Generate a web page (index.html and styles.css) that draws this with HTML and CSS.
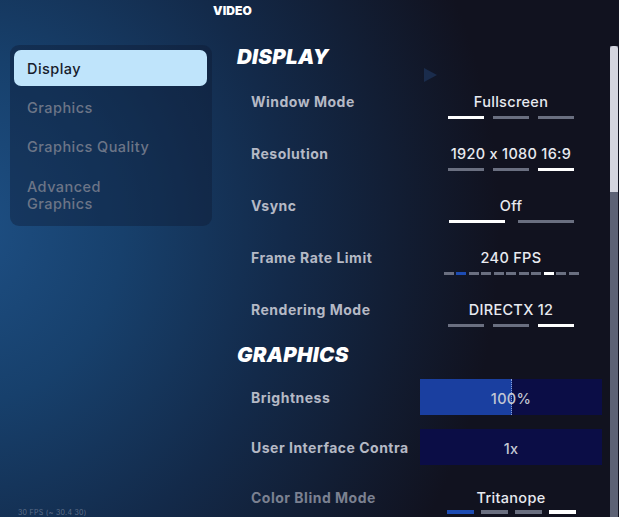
FILE: index.html
```html
<!DOCTYPE html>
<html lang="en">
<head>
<meta charset="utf-8">
<title>Video Settings</title>
<link rel="stylesheet" href="styles.css">
</head>
<body>
<div class="screen">
  <div class="topbar"><span class="tab-title">VIDEO</span></div>
  <div class="main">
    <nav class="sidebar">
      <div class="nav-item active">Display</div>
      <div class="nav-item">Graphics</div>
      <div class="nav-item">Graphics Quality</div>
      <div class="nav-item two-line">Advanced<br>Graphics</div>
    </nav>

    <section class="content">
      <h2 class="section-title">DISPLAY</h2>

      <div class="row">
        <div class="label">Window Mode</div>
        <div class="value">
          <div class="value-text">Fullscreen</div>
          <div class="segs segs-3"><i class="on"></i><i></i><i></i></div>
        </div>
      </div>

      <div class="row">
        <div class="label">Resolution</div>
        <div class="value">
          <div class="value-text">1920 x 1080 16:9</div>
          <div class="segs segs-3"><i></i><i></i><i class="on"></i></div>
        </div>
      </div>

      <div class="row">
        <div class="label">Vsync</div>
        <div class="value">
          <div class="value-text">Off</div>
          <div class="segs segs-2"><i class="on"></i><i></i></div>
        </div>
      </div>

      <div class="row">
        <div class="label">Frame Rate Limit</div>
        <div class="value">
          <div class="value-text">240 FPS</div>
          <div class="segs segs-11"><i></i><i class="blue"></i><i></i><i></i><i></i><i></i><i></i><i></i><i class="on"></i><i></i><i></i></div>
        </div>
      </div>

      <div class="row">
        <div class="label">Rendering Mode</div>
        <div class="value">
          <div class="value-text">DIRECTX 12</div>
          <div class="segs segs-3"><i></i><i></i><i class="on"></i></div>
        </div>
      </div>

      <h2 class="section-title second">GRAPHICS</h2>

      <div class="slider-row">
        <div class="label">Brightness</div>
        <div class="slider">
          <div class="slider-fill" style="width: 50.5%"></div>
          <span class="slider-text">100%</span>
        </div>
      </div>

      <div class="slider-row">
        <div class="label">User Interface Contra</div>
        <div class="slider">
          <span class="slider-text">1x</span>
        </div>
      </div>

      <div class="row last">
        <div class="label dim">Color Blind Mode</div>
        <div class="value">
          <div class="value-text">Tritanope</div>
          <div class="segs segs-4"><i class="blue"></i><i></i><i></i><i class="on"></i></div>
        </div>
      </div>

      <svg class="deco-tri" width="16" height="16" viewBox="0 0 16 16" aria-hidden="true"><path d="M2 1 L15 8 L2 15 Z" fill="#1a2c4c"/></svg>
    </section>

    <div class="scrollbar"><div class="thumb"></div></div>
  </div>
  <div class="fps-stat">30 FPS (~ 30.4 30)</div>
</div>
</body>
</html>
```

FILE: styles.css
```css
* { box-sizing: border-box; margin: 0; padding: 0; }

html, body {
  width: 619px;
  height: 517px;
  overflow: hidden;
  background: #11121f;
}

body {
  font-family: "Inter", "Liberation Sans", sans-serif;
}

.screen {
  position: relative;
  width: 619px;
  height: 517px;
  overflow: hidden;
  background:
    radial-gradient(ellipse 540px 580px at -40px 230px, #1e5085 0%, #17406c 30%, #132a4a 60%, #11121f 100%),
    #11121f;
}

.topbar {
  height: 24px;
  padding-left: 213px;
  padding-top: 1px;
}

.tab-title {
  display: block;
  font-size: 12px;
  line-height: 19px;
  font-weight: 900;
  color: #ffffff;
  letter-spacing: 0.1px;
}

.main {
  display: flex;
  height: 493px;
}

.sidebar {
  width: 202px;
  height: 181px;
  margin-left: 10px;
  margin-top: 21px;
  padding: 5px 5px 4px 4px;
  border-radius: 9px;
  background: rgba(12, 24, 48, 0.38);
  display: flex;
  flex-direction: column;
  gap: 3px;
}

.nav-item {
  height: 36px;
  display: flex;
  align-items: center;
  padding-left: 13px;
  border-radius: 7px;
  font-size: 14.5px;
  font-weight: 500;
  letter-spacing: 0.45px;
  color: #6c7587;
}

.nav-item.active {
  background: #bfe4fb;
  color: #161b2b;
}

.nav-item.two-line {
  height: 55px;
  line-height: 17px;
}

.content {
  position: relative;
  width: 365px;
  margin-left: 25px;
  padding-top: 21px;
}

.section-title {
  height: 24px;
  line-height: 24px;
  margin-bottom: 7px;
  font-size: 20.5px;
  font-weight: 900;
  font-style: italic;
  color: #ffffff;
  letter-spacing: 0.3px;
}

.section-title.second {
  margin-top: 7px;
  margin-bottom: 6px;
}

.row {
  display: flex;
  height: 52px;
  padding-top: 17px;
}

.row.last {
  height: 43px;
  padding-top: 16px;
}

.label {
  width: 183px;
  padding-left: 14px;
  font-size: 14px;
  line-height: 18px;
  font-weight: 700;
  letter-spacing: 0.5px;
  color: #b5b9c5;
  white-space: nowrap;
  overflow: hidden;
}

.label.dim {
  color: #7b8191;
}

.slider-row .label {
  padding-top: 2px;
}

.value {
  width: 182px;
  display: flex;
  flex-direction: column;
  align-items: center;
}

.value-text {
  font-size: 14.5px;
  line-height: 18px;
  font-weight: 500;
  color: #e8eaf0;
  letter-spacing: 0.3px;
  white-space: nowrap;
}

.segs {
  display: flex;
  margin-top: 5px;
  height: 3px;
}

.segs i {
  display: block;
  height: 3px;
  background: #6a6f80;
}

.segs i.on { background: #ffffff; }
.segs i.blue { background: #1d4cb3; }

.segs-3 { gap: 9px; }
.segs-3 i { width: 36px; }

.segs-2 { gap: 13px; }
.segs-2 i { width: 56px; }

.segs-11 { gap: 2.5px; }
.segs-11 i { width: 10px; }

.segs-4 { gap: 7px; margin-top: 3px; height: 4px; }
.segs-4 i { width: 27px; height: 4px; }

.slider-row {
  display: flex;
  align-items: center;
  height: 50px;
  padding-top: 6px;
  padding-bottom: 8px;
}

.slider {
  position: relative;
  width: 182px;
  height: 36px;
  padding-top: 2px;
  background: #0b0d46;
  display: flex;
  align-items: center;
  justify-content: center;
}

.slider-fill {
  position: absolute;
  left: 0;
  top: 0;
  bottom: 0;
  background: #1a3fa0;
  border-right: 1px dotted #8aa0d8;
}

.slider-text {
  position: relative;
  font-size: 14.5px;
  font-weight: 500;
  color: #c3c7d3;
  letter-spacing: 0.3px;
}

.deco-tri {
  position: absolute;
  left: 185px;
  top: 43px;
}

.scrollbar {
  width: 8px;
  margin-left: 8px;
  margin-top: 22px;
  background: #5d6275;
  display: flex;
  flex-direction: column;
}

.thumb {
  height: 146px;
  background: #d4d5df;
  border-radius: 3px 3px 0 0;
}

.fps-stat {
  position: absolute;
  left: 18px;
  bottom: 0;
  font-size: 7px;
  line-height: 9px;
  color: #5d6d88;
  letter-spacing: 0.3px;
}
```
